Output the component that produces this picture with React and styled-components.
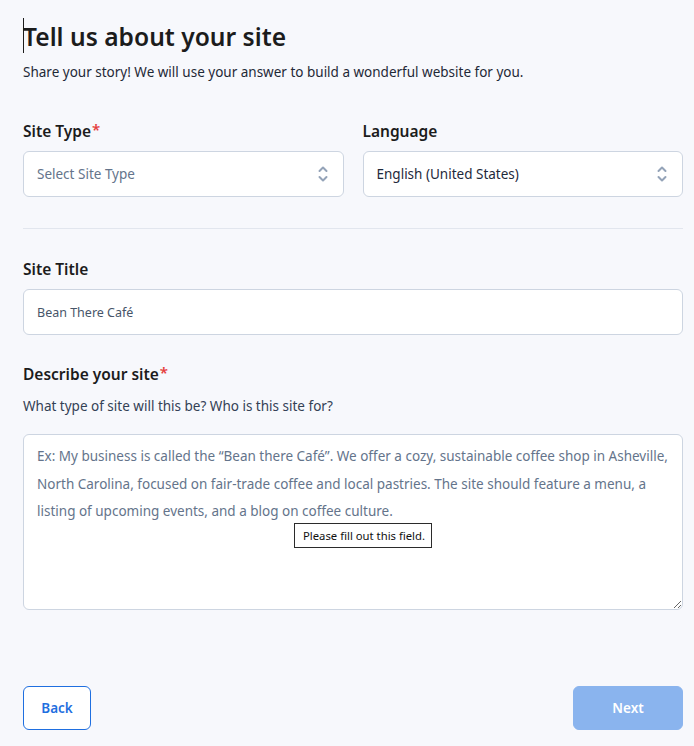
import React from "react";
import styled, { createGlobalStyle } from "styled-components";

const Global = createGlobalStyle`
  html, body { margin: 0; padding: 0; background: #f7f8fc; }
  body { font-family: "Noto Sans", "Open Sans", sans-serif; color: #1e1e1e; }
  * { box-sizing: border-box; }
`;

const Page = styled.div`
  width: 694px;
  min-height: 746px;
  padding: 19px 11px 16px 23px;
  display: flex;
  flex-direction: column;
`;

const Heading = styled.h1`
  position: relative;
  margin: 0;
  font-size: 24.6px;
  line-height: 36px;
  font-weight: 600;
  color: #1c1c1c;
`;

const Caret = styled.span`
  position: absolute;
  left: 0;
  top: -1px;
  width: 1px;
  height: 35px;
  background: #1c1c1c;
`;

const Subtitle = styled.p`
  margin: 7px 0 0;
  font-size: 13.5px;
  line-height: 20px;
  color: #1f2937;
`;

const Row = styled.div`
  display: grid;
  grid-template-columns: 1fr 1fr;
  gap: 19px;
  margin-top: ${(p) => p.$mt || 0}px;
`;

const Field = styled.div`
  display: flex;
  flex-direction: column;
  margin-top: ${(p) => p.$mt || 0}px;
`;

const Label = styled.label`
  font-size: 15.5px;
  line-height: 24px;
  font-weight: 600;
  color: #1c1c1c;
`;

const Req = styled.span`
  position: relative;
  top: -2px;
  color: #e53e3e;
  margin-left: 1px;
  font-size: 15px;
  line-height: 0;
`;

const Help = styled.div`
  margin-top: 10px;
  font-size: 13.5px;
  line-height: 20px;
  color: #334155;
`;

const SelectBox = styled.div`
  margin-top: 8px;
  height: 46px;
  background: #fff;
  border: 1px solid #cdd5e1;
  border-radius: 6px;
  display: flex;
  align-items: center;
  justify-content: space-between;
  padding: 0 14px 0 13px;
  font-size: 13.5px;
  color: ${(p) => (p.$placeholder ? "#64748b" : "#1e293b")};
`;

const Input = styled.div`
  margin-top: 8px;
  height: 46px;
  background: #fff;
  border: 1px solid #cdd5e1;
  border-radius: 6px;
  display: flex;
  align-items: center;
  padding: 0 13px;
  font-size: 12.5px;
  color: #475569;
`;

const Divider = styled.hr`
  margin: 31px 0 0;
  border: 0;
  border-top: 1px solid #e2e6ee;
`;

const AreaWrap = styled.div`
  position: relative;
  margin-top: 18px;
`;

const TextArea = styled.textarea`
  display: block;
  width: 100%;
  height: 176px;
  resize: vertical;
  background: #fff;
  border: 1px solid #cdd5e1;
  border-radius: 6px;
  padding: 8px 13px;
  font-family: "Noto Sans", "Open Sans", sans-serif;
  font-size: 13.5px;
  line-height: 27.5px;
  color: #1e293b;
  outline: none;
  &::placeholder { color: #64748b; opacity: 1; }
`;

const Tooltip = styled.div`
  position: absolute;
  left: 271px;
  top: 89px;
  height: 25px;
  padding: 0 6px 0 8px;
  display: flex;
  align-items: center;
  background: #fff;
  border: 1px solid #2b2b2b;
  font-size: 11.3px;
  color: #111;
  white-space: nowrap;
`;

const Actions = styled.div`
  margin-top: 76px;
  display: flex;
  justify-content: space-between;
`;

const Button = styled.button`
  height: 44px;
  border-radius: 6px;
  font-family: "Noto Sans", "Open Sans", sans-serif;
  font-size: 13.5px;
  font-weight: 600;
  cursor: pointer;
  width: ${(p) => p.$w}px;
  ${(p) =>
    p.$primary
      ? `background:#8ab4ee;border:1px solid #8ab4ee;color:#fff;`
      : `background:#fff;border:1px solid #1f6fe0;color:#1f6fe0;`}
`;

const Chevrons = () => (
  <svg width="12" height="20" viewBox="0 0 12 20" fill="none" stroke="#94a3b8" strokeWidth="2" strokeLinecap="round" strokeLinejoin="round">
    <path d="M2.5 7 L6 3.5 L9.5 7" />
    <path d="M2.5 13 L6 16.5 L9.5 13" />
  </svg>
);

export default function App() {
  return (
    <>
      <Global />
      <Page>
        <Heading>
          <Caret />
          Tell us about your site
        </Heading>
        <Subtitle>Share your story! We will use your answer to build a wonderful website for you.</Subtitle>

        <Row $mt={37}>
          <Field>
            <Label>
              Site Type<Req>*</Req>
            </Label>
            <SelectBox $placeholder>
              <span>Select Site Type</span>
              <Chevrons />
            </SelectBox>
          </Field>
          <Field>
            <Label>Language</Label>
            <SelectBox>
              <span>English (United States)</span>
              <Chevrons />
            </SelectBox>
          </Field>
        </Row>

        <Divider />

        <Field $mt={28}>
          <Label>Site Title</Label>
          <Input>Bean There Café</Input>
        </Field>

        <Field $mt={27}>
          <Label>
            Describe your site<Req>*</Req>
          </Label>
          <Help>What type of site will this be? Who is this site for?</Help>
          <AreaWrap>
            <TextArea placeholder="Ex: My business is called the “Bean there Café”. We offer a cozy, sustainable coffee shop in Asheville, North Carolina, focused on fair-trade coffee and local pastries. The site should feature a menu, a listing of upcoming events, and a blog on coffee culture." />
            <Tooltip>Please fill out this field.</Tooltip>
          </AreaWrap>
        </Field>

        <Actions>
          <Button $w={68}>Back</Button>
          <Button $w={110} $primary>
            Next
          </Button>
        </Actions>
      </Page>
    </>
  );
}
